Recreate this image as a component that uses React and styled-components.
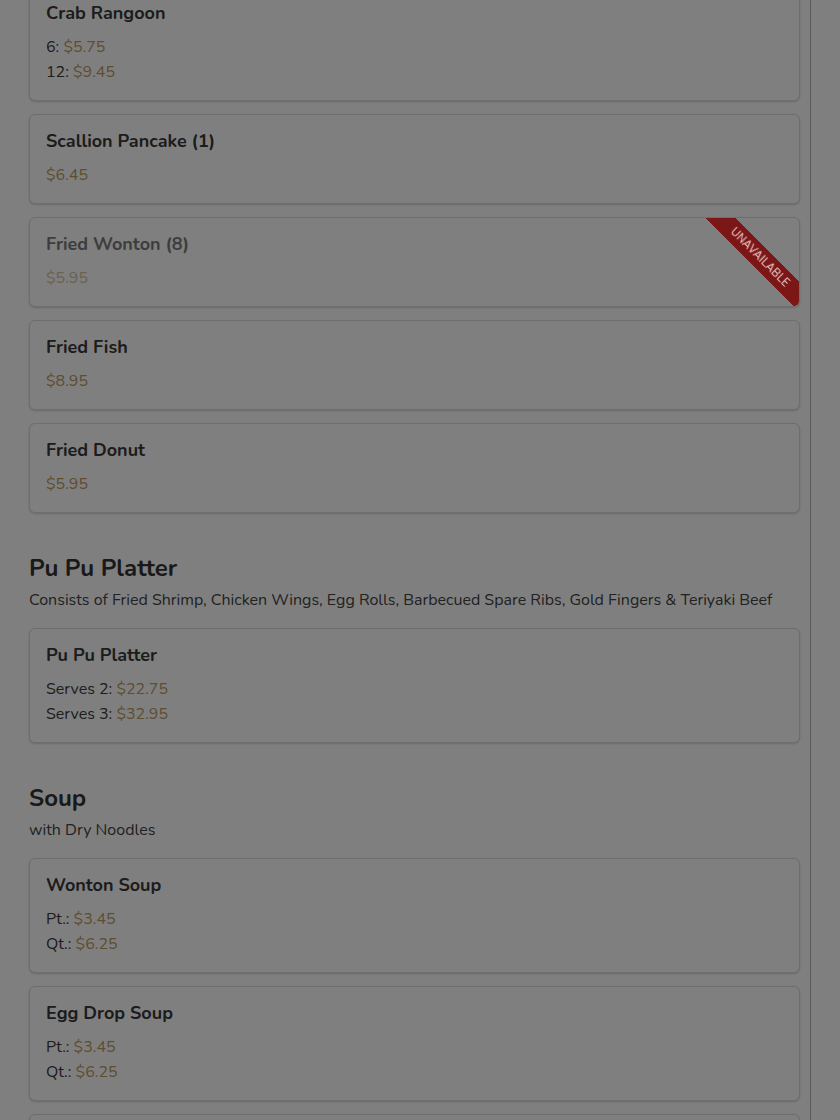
import React from "react";
import styled, { createGlobalStyle } from "styled-components";

const Global = createGlobalStyle`
  html, body { margin: 0; padding: 0; background: #ffffff; }
  body { font-family: "Nunito", "Lato", "Open Sans", sans-serif; color: #3a3a3a; overflow: hidden; }
  * { box-sizing: border-box; }
`;

const Layout = styled.div`
  display: flex;
  min-height: 100vh;
`;

const Main = styled.main`
  width: 811px;
  flex: none;
  padding: 0 10px 0 29px;
  border-right: 1px solid #b4b4b4;
`;

const Aside = styled.aside`
  flex: 1;
`;

const Scroll = styled.div`
  display: flex;
  flex-direction: column;
  gap: 39px;
  margin-top: -14px;
`;

const Section = styled.section`
  display: flex;
  flex-direction: column;
`;

const Heading = styled.h2`
  margin: 0 0 5px;
  padding-top: 2px;
  font-size: 24px;
  line-height: 29px;
  font-weight: 700;
  color: #333333;
`;

const Desc = styled.p`
  margin: 0 0 16px;
  font-size: 16px;
  line-height: 24px;
  color: #444444;
`;

const List = styled.div`
  display: flex;
  flex-direction: column;
  gap: 13px;
`;

const Card = styled.div`
  position: relative;
  overflow: hidden;
  border: 1px solid #dcdcdc;
  border-radius: 6px;
  box-shadow: 0 1px 2px rgba(0, 0, 0, 0.18);
  padding: 16px 16px 16px;
  background: #ffffff;
`;

const Title = styled.h3`
  margin: 0 0 12px;
  font-size: 18px;
  line-height: 20px;
  font-weight: 700;
  color: ${(p) => (p.$muted ? "#7a7a7a" : "#383838")};
`;

const PriceRow = styled.div`
  font-size: 16px;
  line-height: 24px;
  color: ${(p) => (p.$muted ? "#8a8a8a" : "#3a3a3a")};
  & + & { margin-top: 1px; }
`;

const Price = styled.span`
  color: ${(p) => (p.$muted ? "#d4c4a4" : "#bd9b5f")};
`;

const Ribbon = styled.div`
  position: absolute;
  z-index: 20;
  top: 29px;
  right: -41px;
  width: 160px;
  height: 21px;
  background: #7c1717;
  color: rgba(255, 230, 230, 0.8);
  font-size: 11px;
  font-weight: 600;
  letter-spacing: 0.2px;
  text-transform: uppercase;
  display: flex;
  align-items: center;
  justify-content: center;
  transform: rotate(45deg);
`;

const Overlay = styled.div`
  position: fixed;
  inset: 0;
  background: rgba(0, 0, 0, 0.5);
  z-index: 10;
`;

const sections = [
  {
    items: [
      { name: "Crab Rangoon", prices: [["6", "$5.75"], ["12", "$9.45"]] },
      { name: "Scallion Pancake (1)", prices: [[null, "$6.45"]] },
      { name: "Fried Wonton (8)", prices: [[null, "$5.95"]], unavailable: true },
      { name: "Fried Fish", prices: [[null, "$8.95"]] },
      { name: "Fried Donut", prices: [[null, "$5.95"]] },
    ],
  },
  {
    title: "Pu Pu Platter",
    desc: "Consists of Fried Shrimp, Chicken Wings, Egg Rolls, Barbecued Spare Ribs, Gold Fingers & Teriyaki Beef",
    items: [
      { name: "Pu Pu Platter", prices: [["Serves 2", "$22.75"], ["Serves 3", "$32.95"]] },
    ],
  },
  {
    title: "Soup",
    desc: "with Dry Noodles",
    items: [
      { name: "Wonton Soup", prices: [["Pt.", "$3.45"], ["Qt.", "$6.25"]] },
      { name: "Egg Drop Soup", prices: [["Pt.", "$3.45"], ["Qt.", "$6.25"]] },
      { name: "Hot & Sour Soup", prices: [["Pt.", "$3.45"], ["Qt.", "$6.25"]] },
    ],
  },
];

function Item({ item }) {
  const muted = !!item.unavailable;
  return (
    <Card>
      <Title $muted={muted}>{item.name}</Title>
      {item.prices.map(([label, value], i) => (
        <PriceRow key={i} $muted={muted}>
          {label ? `${label}: ` : ""}
          <Price $muted={muted}>{value}</Price>
        </PriceRow>
      ))}
      {muted && <Ribbon>Unavailable</Ribbon>}
    </Card>
  );
}

export default function App() {
  return (
    <>
      <Global />
      <Layout>
        <Main>
          <Scroll>
            {sections.map((s, i) => (
              <Section key={i}>
                {s.title && <Heading>{s.title}</Heading>}
                {s.desc && <Desc>{s.desc}</Desc>}
                <List>
                  {s.items.map((it) => (
                    <Item key={it.name} item={it} />
                  ))}
                </List>
              </Section>
            ))}
          </Scroll>
        </Main>
        <Aside />
      </Layout>
      <Overlay />
    </>
  );
}
